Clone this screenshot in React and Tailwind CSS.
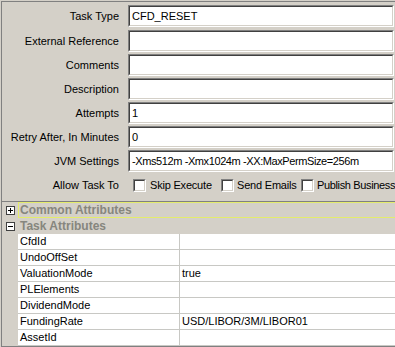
import React from "react";

const fields = [
  { label: "Task Type", value: "CFD_RESET" },
  { label: "External Reference", value: "" },
  { label: "Comments", value: "" },
  { label: "Description", value: "" },
  { label: "Attempts", value: "1" },
  { label: "Retry After, In Minutes", value: "0" },
  { label: "JVM Settings", value: "-Xms512m -Xmx1024m -XX:MaxPermSize=256m", tight: true },
];

const props = [
  { name: "CfdId", value: "" },
  { name: "UndoOffSet", value: "" },
  { name: "ValuationMode", value: "true" },
  { name: "PLElements", value: "" },
  { name: "DividendMode", value: "" },
  { name: "FundingRate", value: "USD/LIBOR/3M/LIBOR01" },
  { name: "AssetId", value: "" },
];

function Input({ value, tight }) {
  return (
    <div className="w-[266px] h-[22px] border border-t-[#808080] border-l-[#808080] border-b-white border-r-white shrink-0">
      <div
        className={`h-full border border-t-[#404040] border-l-[#404040] border-b-[#d4d0c8] border-r-[#d4d0c8] bg-white pl-[2px] flex items-center whitespace-nowrap overflow-hidden ${
          tight ? "tracking-[-0.4px]" : ""
        }`}
      >
        {value}
      </div>
    </div>
  );
}

function Checkbox() {
  return (
    <div className="w-[13px] h-[13px] border border-t-[#808080] border-l-[#808080] border-b-white border-r-white shrink-0">
      <div className="h-full border border-t-[#404040] border-l-[#404040] border-b-[#d4d0c8] border-r-[#d4d0c8] bg-white" />
    </div>
  );
}

function Expander({ open }) {
  return (
    <div className="w-[9px] h-[9px] border border-[#404040] bg-white relative">
      <div className="absolute left-[1px] top-[3px] w-[5px] h-[1px] bg-black" />
      {!open && <div className="absolute left-[3px] top-[1px] w-[1px] h-[5px] bg-black" />}
    </div>
  );
}

export default function App() {
  return (
    <div className="w-[395px] h-[347px] overflow-hidden bg-[#d4d0c8] font-['Liberation_Sans',Arial,sans-serif] text-[11px] text-black">
      <div className="ml-[1px] mt-[1px] border-l border-t border-[#808080] h-[346px] flex flex-col">
        <div className="h-[200px] pt-[3px] flex flex-col gap-[2px]">
          {fields.map((f, i) => (
            <div key={f.label} className={`h-[22px] flex items-center ${i === 1 ? "mt-[1px]" : ""}`}>
              <div className="w-[117px] shrink-0 text-right whitespace-nowrap">{f.label}</div>
              <div className="w-[9px] shrink-0" />
              <Input value={f.value} tight={f.tight} />
            </div>
          ))}
          <div className="h-[22px] flex items-center whitespace-nowrap">
            <div className="w-[117px] shrink-0 text-right">Allow Task To</div>
            <div className="w-[14px] shrink-0" />
            <div className="w-[88px] flex items-center gap-[4px] shrink-0">
              <Checkbox />
              <span className="tracking-[-0.2px]">Skip Execute</span>
            </div>
            <div className="w-[80px] flex items-center gap-[3px] shrink-0">
              <Checkbox />
              <span className="tracking-[-0.2px]">Send Emails</span>
            </div>
            <div className="flex items-center gap-[3px] shrink-0">
              <Checkbox />
              <span className="tracking-[-0.35px]">Publish Business</span>
            </div>
          </div>
        </div>
        <div className="border-t border-[#808080] flex-1 flex flex-col">
          <div className="h-[16px] flex">
            <div className="w-[16px] shrink-0 flex items-center justify-center pl-[1px]">
              <Expander open={false} />
            </div>
            <div className="flex-1 border border-r-0 border-[#e4ec6c] pl-[1px] flex items-center font-bold text-[12px] text-[#86867e] whitespace-nowrap">
              Common Attributes
            </div>
          </div>
          <div className="h-[16px] flex">
            <div className="w-[16px] shrink-0 flex items-center justify-center pl-[1px]">
              <Expander open={true} />
            </div>
            <div className="flex-1 pl-[2px] flex items-center font-bold text-[12px] text-[#86867e] whitespace-nowrap">
              Task Attributes
            </div>
          </div>
          {props.map((p) => (
            <div key={p.name} className="h-[16px] flex">
              <div className="w-[16px] shrink-0" />
              <div className="flex-1 flex bg-white border-b border-[#c8c8c4]">
                <div className="w-[162px] shrink-0 border-r border-[#c8c8c4] pl-[2px] flex items-center whitespace-nowrap">
                  {p.name}
                </div>
                <div className="flex-1 pl-[2px] flex items-center whitespace-nowrap">{p.value}</div>
              </div>
            </div>
          ))}
          <div className="flex-1 border-t border-[#808080]" />
        </div>
      </div>
    </div>
  );
}
